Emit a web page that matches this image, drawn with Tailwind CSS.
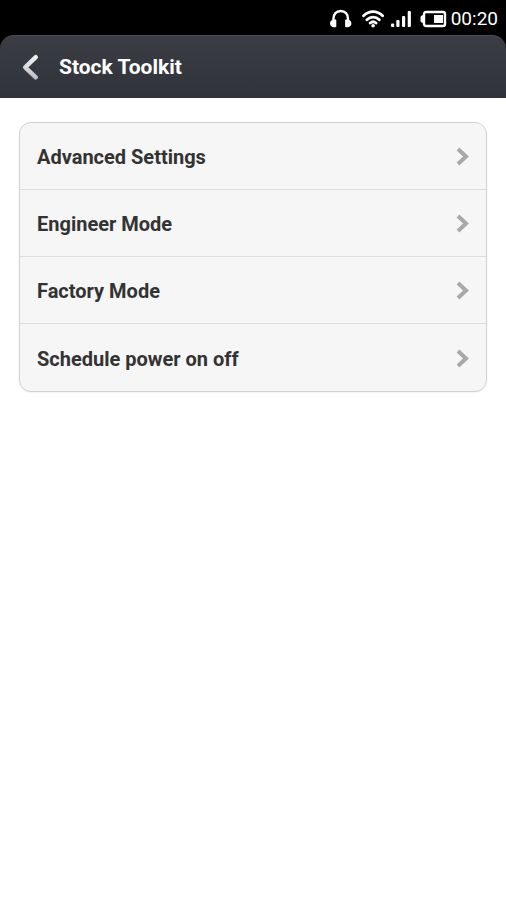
<!DOCTYPE html>
<html lang="en">
<head>
<meta charset="utf-8">
<meta name="viewport" content="width=device-width, initial-scale=1">
<title>Stock Toolkit</title>
<script src="https://cdn.jsdelivr.net/npm/@tailwindcss/browser@4"></script>
</head>
<body class="min-h-screen bg-white font-['Roboto',sans-serif] text-[#333333]">
  <div class="bg-black">
    <div class="flex h-[35px] items-center justify-end pr-2 pt-[3px] text-white">
      <svg class="mr-2" width="24" height="20" viewBox="0 0 24 20" role="img" aria-label="Headphones">
        <path d="M3.400 12V10C3.400 5 6.300 2 10.700 2S18 5 18 10v2" fill="none" stroke="currentColor" stroke-width="2.400"/>
        <path d="M6.300 11.200v6.200q0 .8-.8.800H4C1.500 18 0 16.500 0 14.400s1.500-3.700 4-4h1.500q.8 0 .8.800zM15.100 11.200v6.200q0 .8.800.8h1.500c2.500-.2 4-1.700 4-3.800s-1.500-3.700-4-4h-1.500q-.8 0-.8.800z" fill="currentColor"/>
      </svg>
      <svg class="mr-1" width="24" height="20" viewBox="0 0 24 20" role="img" aria-label="Wi-Fi">
        <g fill="none" stroke="currentColor" stroke-width="2.800" stroke-linecap="round">
          <path d="M1.600 6.700C7.300 1.200 14.900 1.200 20.600 6.700M4.900 10.700c3.600-3.400 8.800-3.400 12.400 0M8.200 14c1.800-1.500 4-1.500 5.800 0"/>
        </g>
        <circle cx="11.100" cy="16.800" r="1.800" fill="currentColor"/>
      </svg>
      <svg class="mr-2" width="22" height="20" viewBox="0 0 22 20" role="img" aria-label="Signal strength">
        <g fill="currentColor">
          <rect x="1" y="14.500" width="3.200" height="3.500" rx="1"/>
          <rect x="6.300" y="11" width="3.200" height="7" rx="1"/>
          <rect x="12" y="7" width="3.200" height="11" rx="1"/>
          <rect x="17.700" y="2" width="3.200" height="16" rx="1"/>
        </g>
      </svg>
      <svg class="mr-1" width="27" height="20" viewBox="0 0 27 20" role="img" aria-label="Battery half full">
        <rect x="4" y="3" width="21" height="14" rx="2" fill="none" stroke="currentColor" stroke-width="2.400"/>
        <path d="M4.500 5.500 1.800 6.500Q.5 7 .5 8v4q0 1 1.300 1.500l2.700 1z" fill="currentColor"/>
        <rect x="14" y="6" width="9" height="8" fill="currentColor"/>
      </svg>
      <time class="text-[19px] leading-5" datetime="00:20">00:20</time>
    </div>
    <header class="flex h-[63px] items-center rounded-t-[14px] border-t border-[#4b4c53] bg-linear-to-b from-[#3b3d45] to-[#31333b] pl-5">
      <button type="button" aria-label="Back" class="mr-4 flex items-center">
        <svg width="23" height="30" viewBox="0 0 23 30" fill="none" stroke="url(#arrow)" stroke-width="4.400" stroke-linejoin="round" stroke-linecap="round" aria-hidden="true">
          <defs>
            <linearGradient id="arrow" x1="0" y1="0" x2="0" y2="1">
              <stop offset="0" stop-color="#f2f2f3"/>
              <stop offset="1" stop-color="#bfbfc2"/>
            </linearGradient>
          </defs>
          <path d="M15.800 5.200 5.200 15.300l10.600 10"/>
        </svg>
      </button>
      <h1 class="text-[21px] leading-7 font-bold text-white">Stock Toolkit</h1>
    </header>
  </div>
  <main class="px-[19px] pt-6">
    <nav aria-label="Stock Toolkit" class="rounded-xl border border-[#d2d2d2] bg-[#f6f6f6] shadow-xs">
      <ul class="text-xl font-bold">
        <li class="h-[67px] border-b border-[#dddddd]"><a href="#advanced" class="flex h-full items-center justify-between px-[17px] pt-0.5">Advanced Settings
          <svg width="14" height="20" viewBox="0 0 14 20" fill="none" stroke="#a9a9a9" stroke-width="4" aria-hidden="true"><path d="M3 2l8 7.500L3 17"/></svg></a></li>
        <li class="h-[67px] border-b border-[#dddddd]"><a href="#engineer" class="flex h-full items-center justify-between px-[17px] pt-0.5">Engineer Mode
          <svg width="14" height="20" viewBox="0 0 14 20" fill="none" stroke="#a9a9a9" stroke-width="4" aria-hidden="true"><path d="M3 2l8 7.500L3 17"/></svg></a></li>
        <li class="h-[67px] border-b border-[#dddddd]"><a href="#factory" class="flex h-full items-center justify-between px-[17px] pt-0.5">Factory Mode
          <svg width="14" height="20" viewBox="0 0 14 20" fill="none" stroke="#a9a9a9" stroke-width="4" aria-hidden="true"><path d="M3 2l8 7.500L3 17"/></svg></a></li>
        <li class="h-[67px]"><a href="#schedule" class="flex h-full items-center justify-between px-[17px] pt-0.5">Schedule power on off
          <svg width="14" height="20" viewBox="0 0 14 20" fill="none" stroke="#a9a9a9" stroke-width="4" aria-hidden="true"><path d="M3 2l8 7.500L3 17"/></svg></a></li>
      </ul>
    </nav>
  </main>
</body>
</html>
